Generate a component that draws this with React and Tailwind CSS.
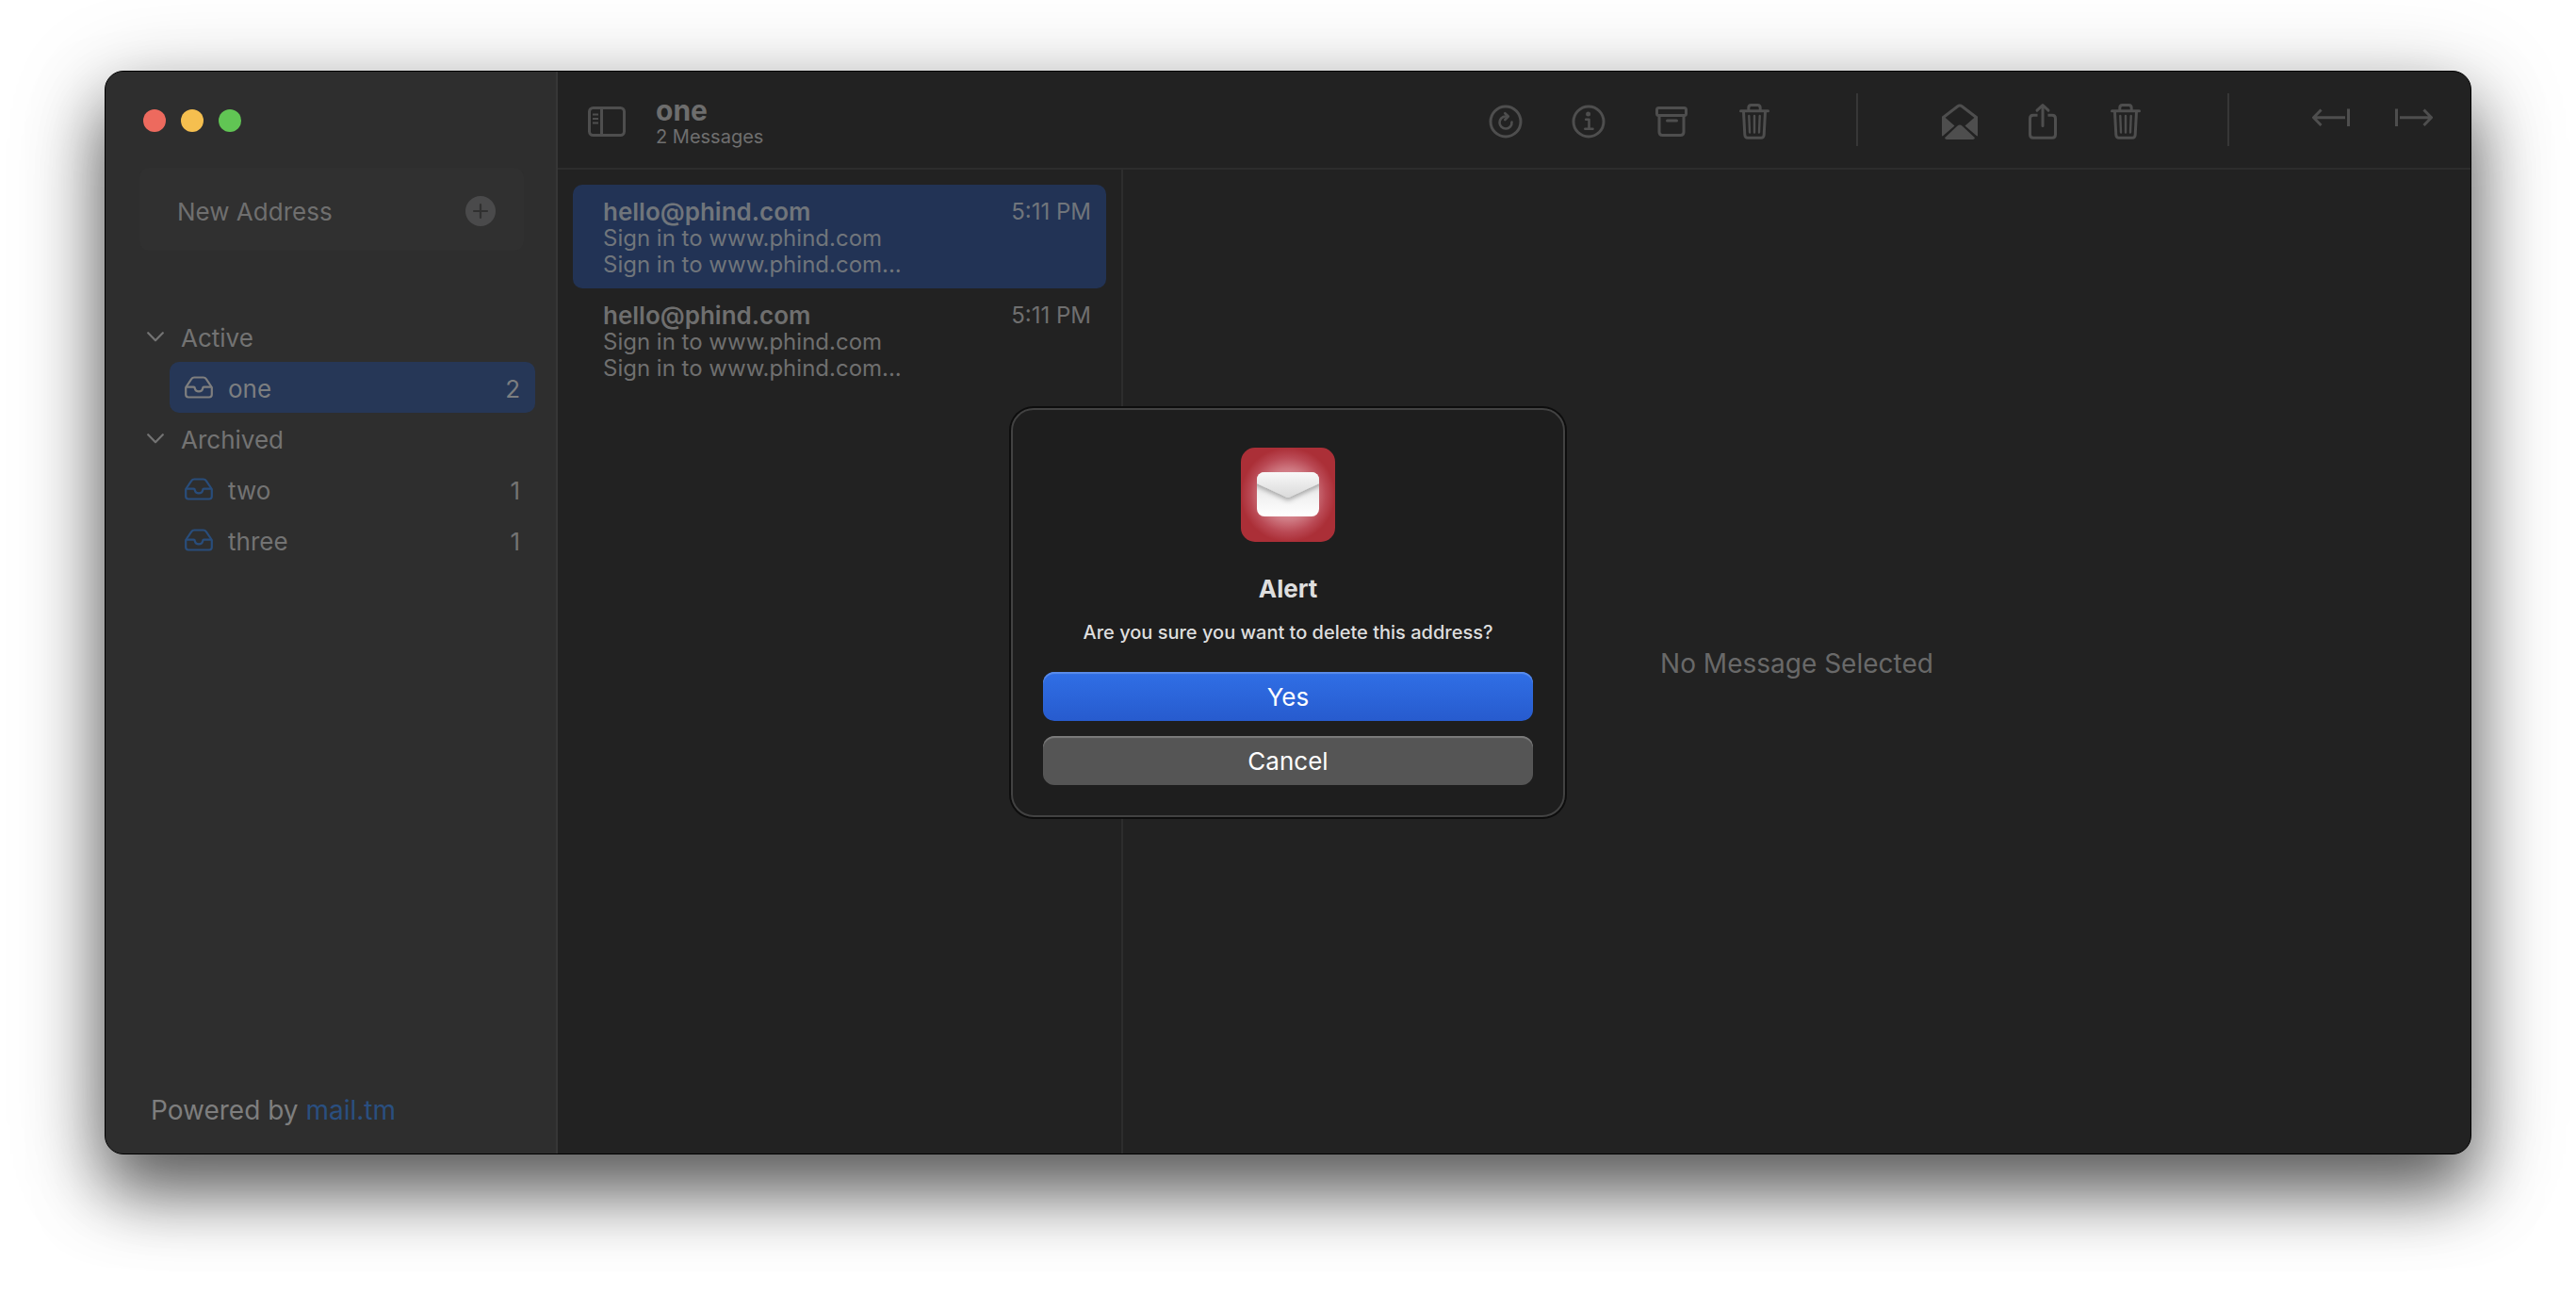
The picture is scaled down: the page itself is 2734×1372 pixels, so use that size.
function TrayIcon({ className }) {
  return (
    <svg viewBox="0 0 30 24" fill="none" stroke="currentColor" strokeWidth="2.2" strokeLinejoin="round" className={"w-[30px] h-6 shrink-0 " + className}>
      <path d="M1.200 12 7.200 3.200Q8.300 1.500 10.200 1.500H19.800Q21.700 1.500 22.800 3.200L28.800 12V19.500Q28.800 22.500 26 22.500H4Q1.200 22.500 1.200 19.500Z" />
      <path d="M1 11.700H9.500Q10.800 11.700 10.800 13.200Q11.500 16.300 15 16.300T19.200 13.200Q19.200 11.700 20.500 11.700H29" />
    </svg>
  );
}

function Chevron() {
  return (
    <svg viewBox="0 0 18 11" fill="none" stroke="currentColor" strokeWidth="2.2" strokeLinecap="round" strokeLinejoin="round" className="w-[18px] h-[11px]">
      <path d="M1.200 1.200 9 9.300 16.800 1.200" />
    </svg>
  );
}

function Glyph({ children }) {
  return (
    <svg viewBox="0 0 40 40" fill="none" stroke="currentColor" strokeWidth="3" strokeLinecap="round" strokeLinejoin="round" className="size-10">
      {children}
    </svg>
  );
}

const glyphs = {
  refresh: (
    <Glyph>
      <circle cx="20" cy="20" r="16" />
      <path d="M26.500 20.500A6.500 6.500 0 1 1 20 14.500H22" strokeWidth="2.600" />
      <path d="M19.300 11.200 22.800 14.500 19.300 18" strokeWidth="2.600" />
    </Glyph>
  ),
  info: (
    <Glyph>
      <circle cx="20" cy="20" r="16" />
      <circle cx="19.600" cy="12" r="2.500" fill="currentColor" stroke="none" />
      <path d="M17.200 17.700H20.500V27.800M16.300 27.800H24.500" strokeWidth="2.600" />
    </Glyph>
  ),
  archive: (
    <Glyph>
      <rect x="4.500" y="5.500" width="31" height="8" rx="2" />
      <path d="M7 13.500V31Q7 34.500 10.500 34.500H29.500Q33 34.500 33 31V13.500M15.500 19H25.500" />
    </Glyph>
  ),
  trash: (
    <Glyph>
      <path d="M5.500 8.800H34.500" />
      <path d="M13.800 8V5.500Q13.800 2.500 16.500 2.500H23.500Q26.200 2.500 26.200 5.500V8" />
      <path d="M8.500 9.500 9.800 34Q10 37.300 13 37.300H27Q30 37.300 30.200 34L31.500 9.500" />
      <path d="M14.300 14 15 31.500M20 14V31.500M25.700 14 25 31.500" strokeWidth="2.400" />
    </Glyph>
  ),
  envelope: (
    <Glyph>
      <path d="M2.500 15.500 17.500 4Q20 2.100 22.500 4L37.500 15.500" />
      <path d="M1 15V34.500Q1 36 2.300 35L14.500 24.500 2.500 14ZM39 15V34.500Q39 36 37.700 35L25.500 24.500 37.500 14Z" fill="currentColor" stroke="none" />
      <path d="M4 37.300 17.300 24.700Q20 22.200 22.700 24.700L36 37.300Q35.500 39 34 39H6Q4.500 39 4 37.300Z" fill="currentColor" stroke="none" />
    </Glyph>
  ),
  share: (
    <Glyph>
      <path d="M14.500 13.200H10Q6.500 13.200 6.500 16.700V33.800Q6.500 37.300 10 37.300H30Q33.500 37.300 33.500 33.800V16.700Q33.500 13.200 30 13.200H25.500" strokeLinecap="butt" />
      <path d="M20 24.500V3M14 8.200 20 2.500 26 8.200" />
    </Glyph>
  ),
  arrowLeft: (
    <Glyph>
      <path d="M9.500 7.500 1.500 15.700 9.500 24M2 15.700H35M38.500 6.500V25" strokeLinecap="butt" />
    </Glyph>
  ),
  arrowRight: (
    <Glyph>
      <path d="M30.500 7.500 38.500 15.700 30.500 24M38 15.700H5M1.500 6.500V25" strokeLinecap="butt" />
    </Glyph>
  ),
};

function ToolGroup({ items }) {
  return (
    <div className="flex mt-1">
      {items.map(([icon, label]) => (
        <button key={label} aria-label={label} className="w-[88px] h-14 flex items-center justify-center text-[#4e4e4e]">
          {glyphs[icon]}
        </button>
      ))}
    </div>
  );
}

function Divider() {
  return <div className="w-0.5 h-14 mx-16 bg-[#373737]" />;
}

function Section({ title, children }) {
  return (
    <section>
      <button className="h-[54px] w-full flex items-center gap-[18px] pl-11 text-[#737373]">
        <Chevron />
        <span className="pt-0.5">{title}</span>
      </button>
      {children}
    </section>
  );
}

function Mailbox({ name, count, selected }) {
  return (
    <button
      className={
        "h-[54px] ml-[68px] w-[388px] flex items-center rounded-[10px] px-4 text-left " +
        (selected ? "bg-[#263757] text-[#7c7e80]" : "text-[#737373]")
      }
    >
      <TrayIcon className={selected ? "text-[#7f7f7f]" : "text-[#294d7b]"} />
      <span className="flex-1 ml-4 pt-0.5">{name}</span>
      <span className="pt-0.5">{count}</span>
    </button>
  );
}

function Message({ selected }) {
  return (
    <button
      className={
        "h-[110px] w-full rounded-[10px] pl-8 pr-4 pt-1 flex flex-col justify-center text-left text-2xl leading-7 " +
        (selected ? "bg-[#223355] text-[#70757b]" : "text-[#6f6f6f]")
      }
    >
      <span className="w-full flex justify-between">
        <span className="text-[26px] font-semibold">hello@phind.com</span>
        <span>5:11 PM</span>
      </span>
      <span>Sign in to www.phind.com</span>
      <span>Sign in to www.phind.com...</span>
    </button>
  );
}

function AppIcon() {
  return (
    <svg viewBox="0 0 100 100" className="size-[100px]">
      <defs>
        <radialGradient id="glow" cx="50" cy="50" r="50" gradientUnits="userSpaceOnUse">
          <stop offset="0.400" stopColor="#d98b94" />
          <stop offset="0.550" stopColor="#ce7780" />
          <stop offset="0.800" stopColor="#b94853" />
          <stop offset="1" stopColor="#ab2f37" />
        </radialGradient>
        <linearGradient id="paper" x1="0" y1="0" x2="0" y2="1">
          <stop offset="0.400" stopColor="#ececec" />
          <stop offset="1" stopColor="#ffffff" />
        </linearGradient>
        <linearGradient id="flap" x1="0" y1="0" x2="0" y2="1">
          <stop offset="0" stopColor="#ffffff" />
          <stop offset="1" stopColor="#dadada" />
        </linearGradient>
        <filter id="soft" x="-20%" y="-20%" width="140%" height="160%">
          <feDropShadow dx="0" dy="3" stdDeviation="2.500" floodColor="#000" floodOpacity="0.300" />
        </filter>
        <clipPath id="body">
          <rect x="17" y="26" width="66" height="47" rx="8" />
        </clipPath>
      </defs>
      <rect width="100" height="100" rx="15" fill="url(#glow)" />
      <g clipPath="url(#body)">
        <rect x="17" y="26" width="66" height="47" fill="url(#paper)" />
        <path d="M10 20H90V34L83 38 51.500 52.500Q50 53.500 48.500 52.500L17 38 10 34Z" fill="url(#flap)" filter="url(#soft)" />
      </g>
    </svg>
  );
}

function AlertDialog() {
  return (
    <div className="absolute inset-0 flex items-center justify-center">
      <div
        role="alertdialog"
        aria-labelledby="alert-title"
        aria-describedby="alert-text"
        className="w-[588px] rounded-[24px] border-2 border-[#424242] bg-[#1e1e1e] px-8 pt-10 pb-8 flex flex-col items-center shadow-[0_0_0_2px_#0d0d0d]"
      >
        <AppIcon />
        <h2 id="alert-title" className="mt-[34px] text-[26px] leading-8 font-bold text-[#dedede]">Alert</h2>
        <p id="alert-text" className="mt-4 text-xl leading-7 font-medium text-[#dedede]">Are you sure you want to delete this address?</p>
        <button className="mt-7 h-[52px] w-full rounded-xl bg-linear-to-b from-[#306fe6] to-[#275bce] text-[26px] text-white shadow-[inset_0_2px_1px_#5b8dec]">
          Yes
        </button>
        <button className="mt-4 h-[52px] w-full rounded-xl bg-[#555555] text-[26px] text-white shadow-[inset_0_2px_1px_#7d7d7d]">
          Cancel
        </button>
      </div>
    </div>
  );
}

export default function App() {
  return (
    <div className="h-screen overflow-hidden bg-white px-[111px] pt-[75px] pb-[147px] font-['Inter',sans-serif]">
      <div className="relative h-full flex overflow-hidden rounded-[20px] border border-black bg-[#222222] text-[26px] shadow-[0_40px_70px_rgba(0,0,0,0.55),0_20px_100px_rgba(0,0,0,0.25)]">
        <aside className="w-[480px] shrink-0 flex flex-col bg-[#2e2e2e] border-r-2 border-[#363636]">
          <div className="flex gap-4 pl-10 pt-10">
            <button aria-label="Close" className="size-6 rounded-full bg-[#ed6a5e]" />
            <button aria-label="Minimize" className="size-6 rounded-full bg-[#f5bf4f]" />
            <button aria-label="Zoom" className="size-6 rounded-full bg-[#61c554]" />
          </div>
          <button className="mt-[38px] ml-9 w-[408px] h-[88px] rounded-[10px] bg-[#303030] flex items-center justify-between pt-1 pl-10 pr-[30px] text-[#6f6f6f]">
            <span>New Address</span>
            <svg viewBox="0 0 32 32" className="size-8">
              <circle cx="16" cy="16" r="16" fill="#4a4a4b" />
              <path d="M16 9V23M9 16H23" stroke="#303030" strokeWidth="2.200" strokeLinecap="round" />
            </svg>
          </button>
          <nav className="mt-16">
            <Section title="Active">
              <Mailbox name="one" count="2" selected />
            </Section>
            <Section title="Archived">
              <Mailbox name="two" count="1" />
              <Mailbox name="three" count="1" />
            </Section>
          </nav>
          <p className="mt-auto mb-7 pl-12 text-[28px] leading-9 text-[#7e7e7e]">
            Powered by <a href="https://mail.tm" className="text-[#2a4f80]">mail.tm</a>
          </p>
        </aside>

        <div className="flex-1 min-w-0 flex flex-col">
          <header className="h-[104px] shrink-0 flex items-center border-b-2 border-[#2d2d2d] pl-8 pr-4">
            <button aria-label="Toggle sidebar" className="mt-1">
              <svg viewBox="0 0 40 32" fill="none" stroke="#4e4e4e" strokeWidth="3" className="w-10 h-8">
                <rect x="1.500" y="1.500" width="37" height="29" rx="4" />
                <path d="M14.500 2V30" />
                <path d="M5 8.500H11M5 13H11M5 17.500H11" strokeWidth="2.200" />
              </svg>
            </button>
            <div className="ml-8 mt-1">
              <h1 className="text-[30px] leading-8 font-bold text-[#6d6d6d]">one</h1>
              <p className="text-xl leading-6 text-[#6f6f6f]">2 Messages</p>
            </div>
            <div className="ml-auto flex items-center">
              <ToolGroup items={[["refresh", "Refresh"], ["info", "Address info"], ["archive", "Archive address"], ["trash", "Delete address"]]} />
              <Divider />
              <ToolGroup items={[["envelope", "Mark as read"], ["share", "Share"], ["trash", "Delete message"]]} />
              <Divider />
              <ToolGroup items={[["arrowLeft", "Previous"], ["arrowRight", "Next"]]} />
            </div>
          </header>
          <div className="flex-1 flex">
            <div className="w-[600px] shrink-0 border-r-2 border-[#2d2d2d] p-4">
              <Message selected />
              <Message />
            </div>
            <main className="flex-1 flex items-center justify-center pt-1 text-[28px] text-[#696969]">No Message Selected</main>
          </div>
        </div>
        <AlertDialog />
      </div>
    </div>
  );
}
